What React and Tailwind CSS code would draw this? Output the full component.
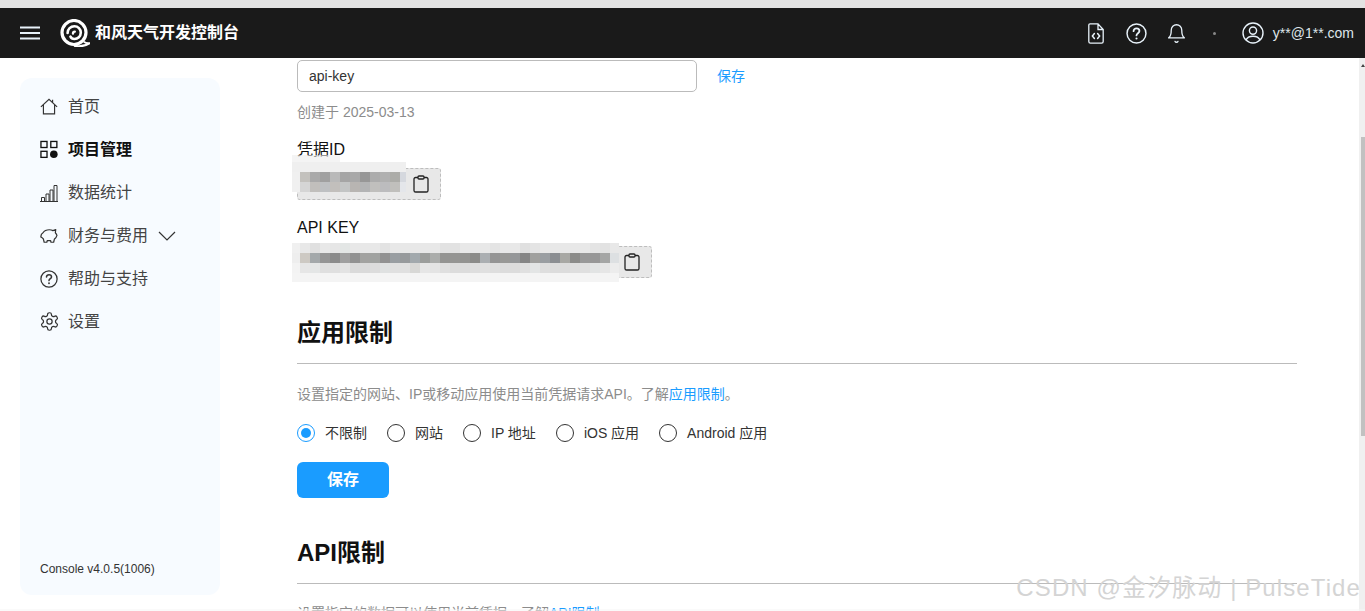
import React from "react";
import { LuSettings, LuBell } from "react-icons/lu";

const IdDark = ["#f0f0f0", "#c3c1bd", "#a9a9a9", "#a0a0a0", "#b9b9b9", "#a5a5a5", "#a8a8a8", "#979797", "#acacac", "#b0b0b0", "#acaca8", "#d5d8de"];
const IdMid = ["#f0f0f0", "#d5d5d5", "#c1bfbc", "#bec0c2", "#c2bfbc", "#c3c5c5", "#b8b5b2", "#b3b4b5", "#c0bfbd", "#bcbcbe", "#c0bfbc", "#e4e6ea"];
const KeyTop = ["#f0f0f0", "#e8e8e8", "#e0e0e0", "#e8e8e8", "#e6e6e6", "#e3e6e5", "#e8e8e8", "#e8e8e8", "#e8e8e8", "#e3e3e3", "#e8e8e8", "#e8e8e8", "#e8e8e8", "#e8e8e8", "#e8e8e8", "#e2e2e2", "#e2e2e2", "#e8e8e8", "#e8e8e8", "#e8e8e8", "#e4e4e4", "#e8e8e8", "#e8e8e8", "#e0e0e0", "#e4e4e4", "#e8e8e8", "#e8e8e8", "#e8e8e8", "#e8e8e8", "#e8e8e8", "#e4e4e4", "#e2e2e2", "#e8e8e8"];
const KeyDark = ["#eeeeee", "#cdc9c3", "#a3a8aa", "#959595", "#8b8b8b", "#a0a0a0", "#929292", "#a2a2a0", "#a0a2a0", "#929292", "#999ea2", "#979a9c", "#a2a9ad", "#9c9e9c", "#abadab", "#949492", "#959593", "#939391", "#8b8b89", "#abafb2", "#949494", "#989896", "#959799", "#868686", "#a0a09e", "#9a9ea2", "#8b8e92", "#a8a8a4", "#8b8b89", "#989898", "#979797", "#a5a6a5", "#dde0e2"];
const KeyMid = ["#f3f3f3", "#e6e6e6", "#e4e6e6", "#dfdfdf", "#dfdfdf", "#e3e3e3", "#dadada", "#dadada", "#dcdcdc", "#dfe1e1", "#e0e0e0", "#e0e0e0", "#d8d8d6", "#e6e6e6", "#e4e4e4", "#dfdfdf", "#dcdcdc", "#dcdcdc", "#dedede", "#e0e0e0", "#dedede", "#dcdcdc", "#dcdcdc", "#e0e0e0", "#e3e5e5", "#dedede", "#dcdcdc", "#dcdcdc", "#dedede", "#dfdfdf", "#e2e4e4", "#e6e6e6", "#ececec"];

const radios = ["不限制", "网站", "IP 地址", "iOS 应用", "Android 应用"];

function HomeIcon() {
  return (
    <svg width="20" height="19" viewBox="0 0 20 19" fill="none" stroke="#333" strokeWidth="1.3">
      <path d="M1 10 10 1.4 19 10M3.8 7.6V17.6H16.2V7.6M14 5.2V2" />
    </svg>
  );
}

function ProjectIcon() {
  return (
    <svg width="19" height="19" viewBox="0 0 19 19" fill="none" stroke="#111" strokeWidth="1.4">
      <rect x="1" y="1" width="6.4" height="6.4" />
      <rect x="11.4" y="1" width="6.4" height="6.4" />
      <rect x="1" y="11.4" width="6.4" height="6.4" />
      <circle cx="14.6" cy="14.6" r="4" fill="#111" stroke="none" />
    </svg>
  );
}

function ChartIcon() {
  return (
    <svg width="18" height="18" viewBox="0 0 18 18" fill="none" stroke="#333" strokeWidth="1">
      <path d="M0 17.5H18M1.5 17.5V13.5H4.5V17.5M6 17.5V10H9V17.5M10 17.5V6H13V17.5M14 17.5V1.5H17V17.5" />
    </svg>
  );
}

function PiggyIcon() {
  return (
    <svg width="19" height="16" viewBox="0 0 19 16" fill="none" stroke="#333" strokeWidth="1.3" strokeLinejoin="round">
      <path d="M3.2 4.6C4.6 2.4 7 1.4 9.8 1.4C11.4 1.4 12.6 1.7 13.6 2.3L16.6 1.2L16.2 4.6C17 5.4 17.6 6.3 17.9 7.4C17.4 9.2 16.6 10.4 15.2 11.3L14.4 14.6H11.6L11.2 13H7.6L7.2 14.6H4.4L3.6 11.2C2.6 10.2 2.2 9.4 1 9.2C0.8 7.6 1.8 5.4 3.2 4.6Z" />
    </svg>
  );
}

function QuestionIcon({ size, color }) {
  return (
    <svg width={size} height={size} viewBox="0 0 20 20" fill="none" stroke={color} strokeWidth="1.4" strokeLinecap="round">
      <circle cx="10" cy="10" r="9" />
      <path d="M7.2 7.8C7.2 6.2 8.4 5.2 10 5.2S12.8 6.2 12.8 7.7C12.8 9.6 10 9.8 10 11.8" strokeWidth="1.7" />
      <circle cx="10" cy="14.7" r="1" fill={color} stroke="none" />
    </svg>
  );
}

function NavItem({ icon, label, active, children }) {
  return (
    <div className={`h-[43px] flex items-center pl-[20px] text-[16px] ${active ? "font-bold text-[#111]" : "text-[#444]"}`}>
      <span className="w-[18px] h-[18px] flex items-center justify-center shrink-0">{icon}</span>
      <span className="ml-[10px]">{label}</span>
      {children}
    </div>
  );
}

function ClipboardIcon() {
  return (
    <svg width="16" height="18" viewBox="0 0 16 18" fill="none" stroke="#222" strokeWidth="1.3">
      <path d="M5 2.5H2.6C1.7 2.5 1 3.2 1 4.1V15.4C1 16.3 1.7 17 2.6 17H13.4C14.3 17 15 16.3 15 15.4V4.1C15 3.2 14.3 2.5 13.4 2.5H11" />
      <rect x="5" y="1" width="6" height="3" rx="1" />
    </svg>
  );
}

function PixelRow({ colors, first, last, height }) {
  return (
    <div className="flex" style={{ height }}>
      {colors.map((c, i) => (
        <div
          key={i}
          style={{
            backgroundColor: c,
            width: i === 0 ? first : i === colors.length - 1 ? last : 10,
          }}
        />
      ))}
    </div>
  );
}

function SecretBox({ width, children }) {
  return (
    <div
      className="relative h-[32px] mt-[7px] border border-dashed border-[#bdbdbd] bg-[#e8e8e8] rounded-[3px] flex items-center justify-end pr-[11px]"
      style={{ width }}
    >
      <ClipboardIcon />
      {children}
    </div>
  );
}

export default function App() {
  return (
    <div className="h-[611px] w-[1365px] overflow-hidden flex flex-col bg-white font-['Liberation_Sans','Noto_Sans_CJK_SC',sans-serif] relative">
      <div className="h-[8px] bg-[#e3e3e3] shrink-0"></div>

      {/* Header */}
      <header className="h-[50px] bg-[#1a1a1a] shrink-0 flex items-center pl-[20px] pr-[11px] text-white">
        <svg width="20" height="14" viewBox="0 0 20 14" stroke="#e8f2fa" strokeWidth="2">
          <path d="M0 1.5H20M0 7H20M0 12.5H20" />
        </svg>
        <svg className="ml-[20px]" width="30" height="28" viewBox="0 0 30 28" fill="none" stroke="#fff">
          <circle cx="14" cy="13.5" r="12" strokeWidth="3.2" />
          <path d="M14 26.8C18 27.6 25 27.2 29.8 24.2C27.6 24.6 25.4 24.2 23.8 22.6" strokeWidth="2" strokeLinejoin="round" />
          <path d="M7.6 14C7.6 10 10.6 7.2 14.4 7.2C18 7.2 20.8 10 20.8 13.6C20.8 17.4 17.8 20 14.4 20C12.4 20 11 19 10.4 17.6" strokeWidth="2.6" strokeLinecap="round" />
          <path d="M13 14.6C13 13.4 13.8 12.6 14.8 12.6" strokeWidth="2.4" strokeLinecap="round" />
        </svg>
        <span className="ml-[5px] text-[16px] font-bold">和风天气开发控制台</span>

        <div className="ml-auto flex items-center">
          <svg width="16" height="21" viewBox="0 0 16 21" fill="none" stroke="#e8f2fa" strokeWidth="1.3" strokeLinecap="round">
            <path d="M2 0.8H10L15.2 6.5V18.5C15.2 19.4 14.5 20.2 13.6 20.2H2.4C1.5 20.2 0.8 19.4 0.8 18.5V2C0.8 1.4 1.3 0.8 2 0.8ZM10 0.8V6.5H15.2" />
            <path d="M6.4 10.6 4.4 13 6.4 15.4M9.6 10.6 11.6 13 9.6 15.4" strokeWidth="1.5" />
          </svg>
          <span className="ml-[22px] flex"><QuestionIcon size={21} color="#e8f2fa" /></span>
          <LuBell className="ml-[19px] text-[#e8f2fa]" size={21} strokeWidth={1.5} />
          <span className="ml-[26px] w-[3px] h-[3px] rounded-full bg-[#888]"></span>
          <svg className="ml-[26px]" width="22" height="22" viewBox="0 0 22 22" fill="none" stroke="#e8f2fa" strokeWidth="1.4">
            <circle cx="11" cy="11" r="10" />
            <circle cx="11" cy="8.6" r="3.6" />
            <path d="M4 18C5.2 15.2 7.8 14.2 11 14.2S16.8 15.2 18 18" />
          </svg>
          <span className="ml-[9px] text-[14px] text-[#dfe6ea]">y**@1**.com</span>
        </div>
      </header>

      <div className="flex flex-1 min-h-0">
        {/* Sidebar */}
        <aside className="w-[200px] ml-[20px] mt-[20px] h-[517px] shrink-0 rounded-[12px] bg-[#f7fbff] pt-[7px] flex flex-col">
          <NavItem icon={<HomeIcon />} label="首页" />
          <NavItem icon={<ProjectIcon />} label="项目管理" active />
          <NavItem icon={<ChartIcon />} label="数据统计" />
          <NavItem icon={<PiggyIcon />} label="财务与费用">
            <svg className="ml-[10px]" width="18" height="10" viewBox="0 0 18 10" fill="none" stroke="#333" strokeWidth="1.2">
              <path d="M1 1 9 9 17 1" />
            </svg>
          </NavItem>
          <NavItem icon={<QuestionIcon size={18} color="#333" />} label="帮助与支持" />
          <NavItem icon={<LuSettings size={21} strokeWidth={1.4} color="#333" className="shrink-0" />} label="设置" />
          <div className="mt-auto mb-[17px] pl-[20px] text-[12px] text-[#333]">Console v4.0.5(1006)</div>
        </aside>

        {/* Main */}
        <main className="w-[1000px] ml-[77px] pt-[2px] shrink-0">
          <div className="flex items-center">
            <input
              readOnly
              value="api-key"
              className="w-[400px] h-[32px] border border-[#bbbbbb] rounded-[5px] pl-[11px] text-[14px] text-[#333] outline-none"
            />
            <a className="ml-[20px] text-[14px] text-[#1a9cff]">保存</a>
          </div>
          <p className="mt-[10px] h-[20px] leading-[20px] text-[14px] text-[#8c8c8c]">创建于 2025-03-13</p>

          <div className="mt-[17px] h-[22px] leading-[22px] text-[16px] text-[#111]">凭据ID</div>
          <SecretBox width={144}>
            <div className="absolute left-[-6px] top-[-14px]">
              <div className="w-[48px] h-[7px] bg-[#ededed]/60"></div>
              <div className="w-[114px] h-[10px] bg-[#efefef]"></div>
              <PixelRow colors={IdDark} first={8} last={6} height={10} />
              <PixelRow colors={IdMid} first={8} last={6} height={10} />
            </div>
          </SecretBox>

          <div className="mt-[17px] h-[22px] leading-[22px] text-[16px] text-[#111]">API KEY</div>
          <SecretBox width={355}>
            <div className="absolute left-[-6px] top-[-4px]">
              <PixelRow colors={KeyTop} first={8} last={9} height={10} />
              <PixelRow colors={KeyDark} first={8} last={9} height={10} />
              <PixelRow colors={KeyMid} first={8} last={9} height={10} />
              <div className="w-[327px] h-[9px] bg-[#f4f4f4]"></div>
            </div>
          </SecretBox>

          <h2 className="mt-[37px] h-[36px] leading-[36px] text-[24px] font-bold text-[#111]">应用限制</h2>
          <div className="mt-[12px] h-px bg-[#bbbbbb]"></div>
          <p className="mt-[20px] h-[20px] leading-[20px] text-[14px] text-[#8c8c8c]">
            设置指定的网站、IP或移动应用使用当前凭据请求API。了解<a className="text-[#1a9cff]">应用限制</a>。
          </p>

          <div className="mt-[19px] flex items-center gap-[20px] h-[20px]">
            {radios.map((r, i) => (
              <label key={r} className="flex items-center gap-[10px] text-[14px] text-[#333]">
                {i === 0 ? (
                  <span className="w-[18px] h-[18px] rounded-full border border-[#1a9cff] flex items-center justify-center">
                    <span className="w-[10px] h-[10px] rounded-full bg-[#1a9cff]"></span>
                  </span>
                ) : (
                  <span className="w-[18px] h-[18px] rounded-full border border-[#333]"></span>
                )}
                {r}
              </label>
            ))}
          </div>

          <button className="mt-[19px] w-[92px] h-[36px] bg-[#1a9cff] rounded-[6px] text-white text-[16px] font-bold">保存</button>

          <h2 className="mt-[37px] h-[36px] leading-[36px] text-[24px] font-bold text-[#111]">API限制</h2>
          <div className="mt-[12px] h-px bg-[#bbbbbb]"></div>
          <p className="mt-[19px] h-[20px] leading-[20px] text-[14px] text-[#8c8c8c] whitespace-nowrap">
            设置指定的数据可以使用当前凭据。了解<a className="text-[#1a9cff]">API限制</a>。
          </p>
        </main>

        {/* Scrollbar */}
        <div className="ml-auto w-[6px] bg-[#f0f0f0] shrink-0 relative flex flex-col items-end">
          <svg className="absolute left-[2px] top-[6px]" width="4" height="3" viewBox="0 0 4 3" fill="#444">
            <path d="M2 0 4 3H0Z" />
          </svg>
          <div className="w-[4px] h-[299px] mt-[79px] bg-[#c1c1c1]"></div>
        </div>
      </div>

      {/* bottom edge of the window */}
      <div className="absolute left-0 right-0 bottom-0 h-[2px] bg-[#f6f6f6]/50"></div>

      {/* CSDN watermark */}
      <div className="absolute right-[4px] top-[572px] text-[24px] leading-[32px] tracking-[1.1px] text-[#d4d4d4] whitespace-nowrap">
        CSDN @金汐脉动 | PulseTide
      </div>
    </div>
  );
}
